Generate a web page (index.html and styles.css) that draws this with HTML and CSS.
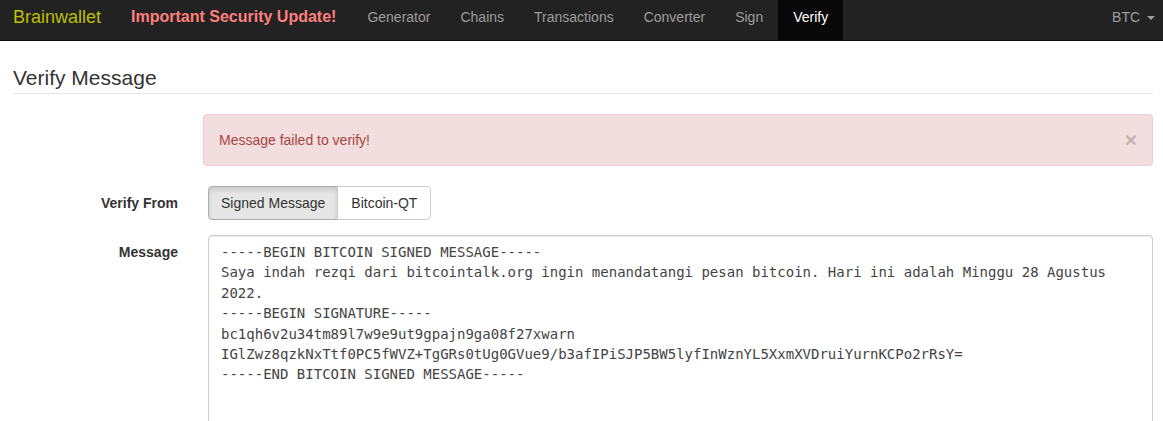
FILE: index.html
```html
<!DOCTYPE html>
<html lang="en">
<head>
<meta charset="utf-8">
<title>Brainwallet - Verify</title>
<link rel="stylesheet" href="styles.css">
</head>
<body>
<nav class="navbar">
  <a class="brand" href="#">Brainwallet</a>
  <a class="important" href="#">Important Security Update!</a>
  <ul class="nav">
    <li><a href="#">Generator</a></li>
    <li><a href="#">Chains</a></li>
    <li><a href="#">Transactions</a></li>
    <li><a href="#">Converter</a></li>
    <li><a href="#">Sign</a></li>
    <li class="active"><a href="#">Verify</a></li>
  </ul>
  <div class="nav-right"><a href="#">BTC <span class="caret"></span></a></div>
</nav>
<main class="content">
  <div class="legend">Verify Message</div>
  <div class="alert">
    <span>Message failed to verify!</span>
    <span class="close">×</span>
  </div>
  <div class="form-row">
    <label class="label label-btn">Verify From</label>
    <div class="btn-group">
      <button class="btn active">Signed Message</button>
      <button class="btn">Bitcoin-QT</button>
    </div>
  </div>
  <div class="form-row">
    <label class="label">Message</label>
    <div class="textarea">-----BEGIN BITCOIN SIGNED MESSAGE-----
Saya indah rezqi dari bitcointalk.org ingin menandatangi pesan bitcoin. Hari ini adalah Minggu 28 Agustus 2022.
-----BEGIN SIGNATURE-----
bc1qh6v2u34tm89l7w9e9ut9gpajn9ga08f27xwarn
IGlZwz8qzkNxTtf0PC5fWVZ+TgGRs0tUg0GVue9/b3afIPiSJP5BW5lyfInWznYL5XxmXVDruiYurnKCPo2rRsY=
-----END BITCOIN SIGNED MESSAGE-----</div>
  </div>
</main>
</body>
</html>
```

FILE: styles.css
```css
* { box-sizing: border-box; }
html, body { margin: 0; padding: 0; }
body {
  font-family: "Liberation Sans", Arial, Helvetica, sans-serif;
  font-size: 14px;
  line-height: 20px;
  color: #333;
  background: #fff;
  overflow: hidden;
}
a { text-decoration: none; }

.navbar {
  display: flex;
  align-items: stretch;
  height: 41px;
  background: #222;
  border-bottom: 1px solid #080808;
  padding-left: 0;
}
.brand {
  color: #bfbf00;
  font-size: 18px;
  line-height: 20px;
  padding: 7px 15px 13px 13px;
}
.important {
  color: #ff7f7f;
  font-weight: bold;
  font-size: 16px;
  line-height: 20px;
  padding: 7px 16px 13px 15px;
}
.nav {
  list-style: none;
  margin: 0;
  padding: 0;
  display: flex;
}
.nav li a {
  display: block;
  color: #9d9d9d;
  padding: 7px 15px 13px;
  height: 40px;
}
.nav li.active a {
  background: #080808;
  color: #fff;
}
.nav-right {
  margin-left: auto;
}
.nav-right a {
  display: block;
  color: #9d9d9d;
  padding: 7px 8px 13px 15px;
}
.caret {
  display: inline-block;
  width: 0;
  height: 0;
  margin-left: 3px;
  vertical-align: middle;
  border-top: 4px solid #9d9d9d;
  border-left: 4px solid transparent;
  border-right: 4px solid transparent;
}

.content {
  padding: 0 10px 0 13px;
}
.legend {
  margin-top: 22px;
  font-size: 21px;
  line-height: 30px;
  color: #333;
  border-bottom: 1px solid #e5e5e5;
  margin-bottom: 20px;
}
.alert {
  display: flex;
  justify-content: space-between;
  align-items: center;
  margin-left: 190px;
  padding: 15px;
  background: #f2dede;
  border: 1px solid #ebccd1;
  border-radius: 4px;
  color: #a94442;
  margin-bottom: 20px;
}
.close {
  font-size: 21px;
  font-weight: bold;
  line-height: 20px;
  color: #000;
  opacity: 0.2;
  margin-right: 0;
}
.form-row {
  display: flex;
  align-items: flex-start;
  margin-bottom: 15px;
}
.label {
  width: 165px;
  flex: none;
  text-align: right;
  font-weight: bold;
  padding-top: 7px;
  margin-right: 30px;
}
.btn-group {
  display: flex;
}
.btn {
  font-family: inherit;
  font-size: 14px;
  line-height: 20px;
  height: 34px;
  padding: 6px 12px;
  color: #333;
  background: #fff;
  border: 1px solid #ccc;
  margin: 0;
}
.btn:first-child {
  border-radius: 4px 0 0 4px;
}
.btn:last-child {
  border-radius: 0 4px 4px 0;
  margin-left: -1px;
  padding: 6px 13px;
}
.btn.active {
  background: #e6e6e6;
  border-color: #adadad;
  box-shadow: inset 0 3px 5px rgba(0,0,0,0.125);
}
.textarea {
  flex: 1;
  min-width: 0;
  height: 260px;
  border: 1px solid #ccc;
  border-radius: 4px;
  padding: 6px 12px;
  font-family: "DejaVu Sans Mono", Menlo, monospace;
  font-size: 14px;
  line-height: 20.4px;
  color: #444;
  white-space: pre-wrap;
  word-wrap: break-word;
  box-shadow: inset 0 1px 1px rgba(0,0,0,0.075);
}
```
